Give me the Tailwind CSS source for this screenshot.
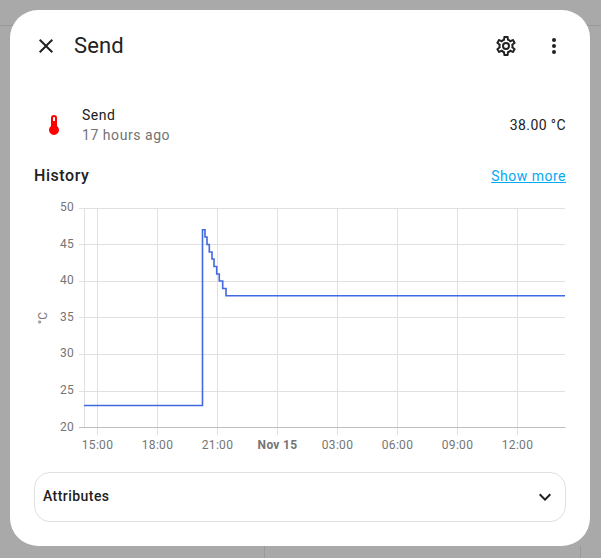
<!doctype html>
<html>
<head>
<meta charset="utf-8">
<script src="https://cdn.jsdelivr.net/npm/@tailwindcss/browser@4"></script>
</head>
<body class="m-0 overflow-hidden">
<div class="relative w-[601px] h-[558px] bg-[#a9a9a9] p-[10px] pb-[12px] font-['Roboto',sans-serif] text-[#212121]">
  <div class="absolute left-0 right-0 top-[25px] h-px bg-[#999999]"></div>
  <div class="absolute left-[264px] top-[546px] bottom-0 w-px bg-[#999999]"></div>
  <div class="absolute left-[580px] top-[546px] bottom-0 w-px bg-[#999999]"></div>
  <div class="relative w-[580px] h-[536px] bg-white rounded-[28px] flex flex-col">
    <header class="flex items-center h-[72px] pl-[24px] pr-[24px]">
      <svg class="w-6 h-6 fill-[#212121]" viewBox="0 0 24 24"><path d="M19,6.41L17.59,5L12,10.59L6.41,5L5,6.41L10.59,12L5,17.59L6.41,19L12,13.41L17.59,19L19,17.59L13.41,12L19,6.41Z"/></svg>
      <div class="ml-[16px] text-[22px] leading-[28px] flex-1 tracking-[0.1px]">Send</div>
      <svg class="w-6 h-6 fill-[#212121] mr-[24px]" viewBox="0 0 24 24"><path d="M12,8A4,4 0 0,1 16,12A4,4 0 0,1 12,16A4,4 0 0,1 8,12A4,4 0 0,1 12,8M12,10A2,2 0 0,0 10,12A2,2 0 0,0 12,14A2,2 0 0,0 14,12A2,2 0 0,0 12,10M10,22C9.75,22 9.54,21.82 9.5,21.58L9.13,18.93C8.5,18.68 7.96,18.34 7.44,17.94L4.95,18.95C4.73,19.03 4.46,18.95 4.34,18.73L2.34,15.27C2.21,15.05 2.27,14.78 2.46,14.63L4.57,12.97L4.5,12L4.57,11L2.46,9.37C2.27,9.22 2.21,8.95 2.34,8.73L4.34,5.27C4.46,5.05 4.73,4.96 4.95,5.05L7.44,6.05C7.96,5.66 8.5,5.32 9.13,5.07L9.5,2.42C9.54,2.18 9.75,2 10,2H14C14.25,2 14.46,2.18 14.5,2.42L14.87,5.07C15.5,5.32 16.04,5.66 16.56,6.05L19.05,5.05C19.27,4.96 19.54,5.05 19.66,5.27L21.66,8.73C21.79,8.95 21.73,9.22 21.54,9.37L19.43,11L19.5,12L19.43,13L21.54,14.63C21.73,14.78 21.79,15.05 21.66,15.27L19.66,18.73C19.54,18.95 19.27,19.04 19.05,18.95L16.56,17.95C16.04,18.34 15.5,18.68 14.87,18.93L14.5,21.58C14.46,21.82 14.25,22 14,22H10M11.25,4L10.88,6.61C9.68,6.86 8.62,7.5 7.85,8.39L5.44,7.35L4.69,8.65L6.8,10.2C6.4,11.37 6.4,12.64 6.8,13.8L4.68,15.36L5.43,16.66L7.86,15.62C8.63,16.5 9.68,17.14 10.87,17.38L11.24,20H12.76L13.13,17.39C14.32,17.14 15.37,16.5 16.14,15.62L18.57,16.66L19.32,15.36L17.2,13.81C17.6,12.64 17.6,11.37 17.2,10.2L19.31,8.65L18.56,7.35L16.15,8.39C15.38,7.5 14.32,6.86 13.12,6.62L12.75,4H11.25Z"/></svg>
      <svg class="w-6 h-6 fill-[#212121]" viewBox="0 0 24 24"><path d="M12,16A2,2 0 0,1 14,18A2,2 0 0,1 12,20A2,2 0 0,1 10,18A2,2 0 0,1 12,16M12,10A2,2 0 0,1 14,12A2,2 0 0,1 12,14A2,2 0 0,1 10,12A2,2 0 0,1 12,10M12,4A2,2 0 0,1 14,6A2,2 0 0,1 12,8A2,2 0 0,1 10,6A2,2 0 0,1 12,4Z"/></svg>
    </header>
    <div class="flex items-center mt-[23px] h-[40px] pl-[32px] pr-[24px]">
      <svg class="w-6 h-6 fill-[#ff0000]" viewBox="0 0 24 24"><path d="M15 13V5A3 3 0 0 0 9 5V13A5 5 0 1 0 15 13M12 4A1 1 0 0 1 13 5V8H11V5A1 1 0 0 1 12 4Z"/></svg>
      <div class="ml-[16px] flex-1 text-[14px] leading-[20px] tracking-[0.55px]">
        <div>Send</div>
        <div class="text-[#727272]">17 hours ago</div>
      </div>
      <div class="text-[14px] leading-[20px] tracking-[0.4px]">38.00 °C</div>
    </div>
    <div class="flex items-center justify-between mt-[19px] h-[24px] px-[24px]">
      <div class="text-[16px] font-medium tracking-[0.55px]">History</div>
      <div class="text-[14px] tracking-[0.5px] underline text-[#03a9f4]">Show more</div>
    </div>
    <svg class="block ml-[24px] mt-[7px] w-[532px] h-[265px]" viewBox="34 195 532 265" font-family="Roboto" font-size="12" fill="#757575">
      <g stroke="#e0e0e0" stroke-width="1">
        <path d="M79 208.5H565M79 244.5H565M79 281.5H565M79 317.5H565M79 354.5H565M79 391.5H565"/>
        <path d="M97.5 208V435M157.5 208V435M217.5 208V435M277.5 208V435M337.5 208V435M397.5 208V435M457.5 208V435M517.5 208V435"/>
        <path d="M84.5 208V427"/>
      </g>
      <path d="M79 427.5H565.5" stroke="#bfbfbf"/>
      <g text-anchor="end" letter-spacing="0.3">
        <text x="74" y="211">50</text><text x="74" y="248">45</text><text x="74" y="284">40</text><text x="74" y="321">35</text><text x="74" y="357">30</text><text x="74" y="394">25</text><text x="74" y="431">20</text>
      </g>
      <text x="47" y="318" transform="rotate(-90 47 318)" text-anchor="middle">°C</text>
      <g text-anchor="middle" letter-spacing="0.3">
        <text x="97.5" y="449">15:00</text><text x="157.5" y="449">18:00</text><text x="217.5" y="449">21:00</text>
        <text x="277.5" y="449" font-weight="700">Nov 15</text>
        <text x="337.5" y="449">03:00</text><text x="397.5" y="449">06:00</text><text x="457.5" y="449">09:00</text><text x="517.5" y="449">12:00</text>
      </g>
      <path fill="none" stroke="#4169e1" stroke-width="1.6" d="M84 405.5H202.5V229.8H205V237H207V244.5H209.3V252H212V259H214V266.5H216.7V274H219.3V281H222.7V288.5H226V295.8H565"/>
    </svg>
    <div class="mx-[24px] mt-[12px] h-[50px] rounded-[16px] border border-[#e0e0e0] flex items-center justify-between pl-[8px] pr-[8px]">
      <div class="text-[14px] font-medium tracking-[0.45px] relative top-[-1px]">Attributes</div>
      <svg class="w-6 h-6 fill-[#212121]" viewBox="0 0 24 24"><path d="M7.41,8.58L12,13.17L16.59,8.58L18,10L12,16L6,10L7.41,8.58Z"/></svg>
    </div>
  </div>
</div>
</body>
</html>
